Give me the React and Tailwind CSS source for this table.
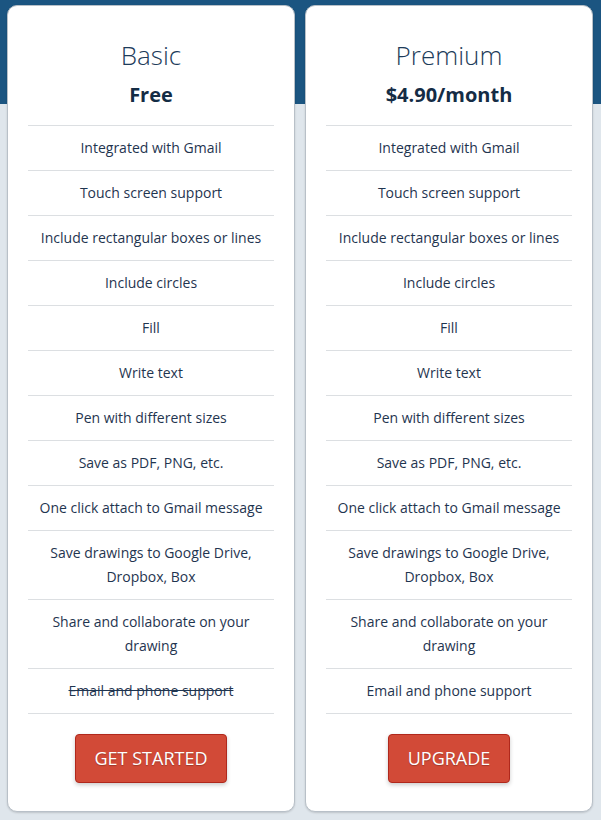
import React from "react";

const features = [
  ["Integrated with Gmail"],
  ["Touch screen support"],
  ["Include rectangular boxes or lines"],
  ["Include circles"],
  ["Fill"],
  ["Write text"],
  ["Pen with different sizes"],
  ["Save as PDF, PNG, etc."],
  ["One click attach to Gmail message"],
  ["Save drawings to Google Drive,", "Dropbox, Box"],
  ["Share and collaborate on your", "drawing"],
  ["Email and phone support"],
];

function Card({ title, price, button, strikeLast }) {
  return (
    <div className="flex-1 bg-white rounded-[10px] border border-[#b8c0c8] shadow-[0_1px_2px_rgba(0,0,0,0.15)] px-[20px] pt-[32px] pb-[28px] flex flex-col items-center">
      <div className="text-[26px] leading-[35px] font-light text-[#1d3c5a]">{title}</div>
      <div className="mt-[8px] text-[20px] leading-[28px] font-bold text-[#142c45]">{price}</div>
      <div className="mt-[16px] w-full border-t border-[#dcdfe2]">
        {features.map((lines, i) => {
          const twoLine = lines.length > 1;
          const strike = strikeLast && i === features.length - 1;
          return (
            <div
              key={i}
              className={`border-b border-[#dcdfe2] flex flex-col items-center justify-center text-center text-[14px] leading-[24px] text-[#1f3550] whitespace-nowrap ${twoLine ? "h-[69px]" : "h-[45px]"}`}
            >
              {lines.map((l, j) => (
                <span key={j} className={strike ? "line-through" : ""}>{l}</span>
              ))}
            </div>
          );
        })}
      </div>
      <button className="mt-[20px] h-[49px] px-[19px] rounded-[4px] bg-[#d24a37] border border-[#b0281c] text-white text-[18px] font-medium uppercase shadow-[0_2px_4px_rgba(0,0,0,0.2)] [text-shadow:0_1px_1px_rgba(0,0,0,0.25)]">
        {button}
      </button>
    </div>
  );
}

export default function App() {
  return (
    <div
      className="w-[601px] h-[820px] bg-[linear-gradient(#1b5581_0px,#1b5581_104px,#dfe6ec_104px)] flex gap-[10px] pl-[7px] pr-[8px] pt-[5px] items-start"
      style={{ fontFamily: '"Open Sans", sans-serif' }}
    >
      <Card title="Basic" price="Free" button="Get Started" strikeLast />
      <Card title="Premium" price="$4.90/month" button="Upgrade" />
    </div>
  );
}
